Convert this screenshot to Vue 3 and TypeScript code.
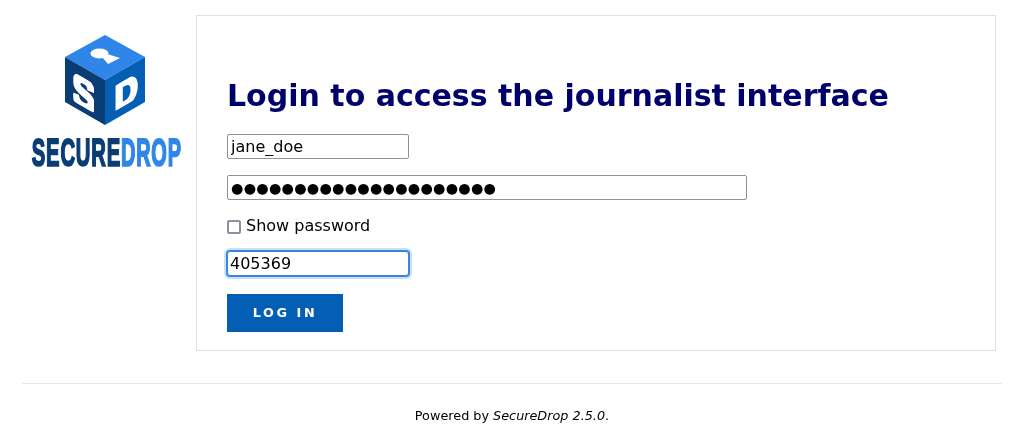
<script setup lang="ts">
import { computed, ref } from 'vue'

const username = ref('jane_doe')
const secret = ref('correct-horse-battery')
const token = ref('405369')
const showPassword = ref(false)
const shownPassword = computed(() =>
  showPassword.value ? secret.value : '●'.repeat(secret.value.length)
)
</script>

<template>
  <div class="page">
    <div class="content">
      <aside class="side">
        <svg class="logo" width="170" height="155" viewBox="0 0 170 155" role="img" aria-label="SecureDrop">
          <defs>
            <clipPath id="panel-s"><polygon points="53.3,46.7 74,59 74,88 53.3,76" /></clipPath>
            <clipPath id="panel-d"><polygon points="95,61 118,47.3 118,72.7 95,86" /></clipPath>
            <clipPath id="word-band"><rect x="0" y="112" width="170" height="29.7" /></clipPath>
          </defs>
          <polygon points="85,10 125,32 85,55 45,32" fill="#2f86e8" />
          <polygon points="45,32 85,55 85,100 45,77" fill="#0a3d73" />
          <polygon points="125,32 85,55 85,100 125,77" fill="#045fb4" />
          <ellipse cx="79.5" cy="28.5" rx="9" ry="5" fill="#fff" />
          <polygon points="84,28 100,33 88,39 82,32" fill="#fff" />
          <g clip-path="url(#panel-s)">
            <text class="cube-letter" transform="matrix(1.75 1.01 0 2.2 51.9 76.8)">S</text>
          </g>
          <g clip-path="url(#panel-d)">
            <text class="cube-letter" transform="matrix(1.6 -0.925 0 1.9 94.7 87.3)">D</text>
          </g>
          <g clip-path="url(#word-band)">
            <text class="logo-word" transform="translate(11.8 140.5) scale(0.52 1)" fill="#0a3d73" stroke="#0a3d73">SECURE</text>
            <text class="logo-word" transform="translate(101 140.5) scale(0.512 1)" fill="#2f86e8" stroke="#2f86e8">DROP</text>
          </g>
        </svg>
      </aside>
      <main class="card">
        <h1 class="title">Login to access the journalist interface</h1>
        <form class="form" @submit.prevent>
          <input v-model="username" class="field short" type="text" name="username" />
          <input :value="shownPassword" class="field long masked" type="text" name="password" readonly />
          <label class="check">
            <input v-model="showPassword" class="box" type="checkbox" />
            <span>Show password</span>
          </label>
          <input v-model="token" class="field short focused" type="text" name="token" />
          <button class="submit" type="submit">LOG IN</button>
        </form>
      </main>
    </div>
    <footer class="footer">
      <p>Powered by <em>SecureDrop 2.5.0</em>.</p>
    </footer>
  </div>
</template>

<style>
html, body { margin: 0; background: #fff; }
</style>

<style scoped>
.page {
  width: 1024px;
  height: 434px;
  overflow: hidden;
  box-sizing: border-box;
  padding: 15px 22px 0;
  font-family: "DejaVu Sans", sans-serif;
  color: #000;
  will-change: transform;
}
.content {
  display: flex;
  align-items: flex-start;
  margin-right: 6px;
}
.side {
  width: 174px;
  flex: none;
  padding-top: 10px;
}
.logo {
  display: block;
  margin-left: -2px;
}
.logo-word {
  font-family: "Liberation Sans", sans-serif;
  font-weight: 700;
  font-size: 39px;
  letter-spacing: 1.5px;
  stroke-width: 1.8px;
  stroke-linejoin: miter;
}
.cube-letter {
  font-family: "Liberation Sans", sans-serif;
  font-weight: 700;
  font-size: 20px;
  fill: #fff;
  stroke: #fff;
  stroke-width: 1.6px;
  stroke-linejoin: miter;
}
.card {
  flex: 1;
  height: 336px;
  box-sizing: border-box;
  border: 1px solid #e0e0e0;
  padding: 61px 30px 0;
}
.title {
  margin: 0 0 19px;
  font-size: 30px;
  line-height: 38px;
  font-weight: 700;
  color: #00006b;
}
.form {
  display: flex;
  flex-direction: column;
  align-items: flex-start;
}
.field {
  box-sizing: border-box;
  display: block;
  height: 25px;
  padding: 0 3px;
  margin: 0 0 16px;
  border: 1px solid #8f8f9d;
  border-radius: 2px;
  font-family: "DejaVu Sans", sans-serif;
  font-size: 16px;
  color: #000;
  background: #fff;
  outline: none;
}
.short { width: 182px; }
.long { width: 520px; }
.masked {
  font-size: 14.2px;
  letter-spacing: 0.25px;
}
.focused {
  margin: 0 0 18px;
  border-color: #3a84e0;
  border-radius: 3px;
  padding: 0 2px;
  box-shadow: 0 0 0 1px #3a84e0, 0 0 0 3px #c5e3fc;
}
.check {
  display: flex;
  align-items: center;
  gap: 5px;
  height: 19px;
  margin: 0 0 16px;
  font-size: 16px;
  line-height: 19px;
}
.box {
  appearance: none;
  box-sizing: border-box;
  width: 14px;
  height: 14px;
  margin: 2px 0 0;
  border: 2px solid #8f8f9d;
  border-radius: 2px;
  background: #fff;
}
.box:checked {
  background: #3a84e0;
}
.submit {
  width: 116px;
  height: 38px;
  padding: 0 0 1px;
  border: none;
  background: #045fb4;
  color: #fff;
  font-family: "DejaVu Sans", sans-serif;
  font-weight: 700;
  font-size: 12.8px;
  letter-spacing: 2.56px;
}
.footer {
  margin-top: 32px;
  border-top: 1px solid #e6e6f0;
  text-align: center;
  font-size: 12.8px;
  line-height: 16px;
}
.footer p {
  margin: 24px 0 0;
}
</style>
